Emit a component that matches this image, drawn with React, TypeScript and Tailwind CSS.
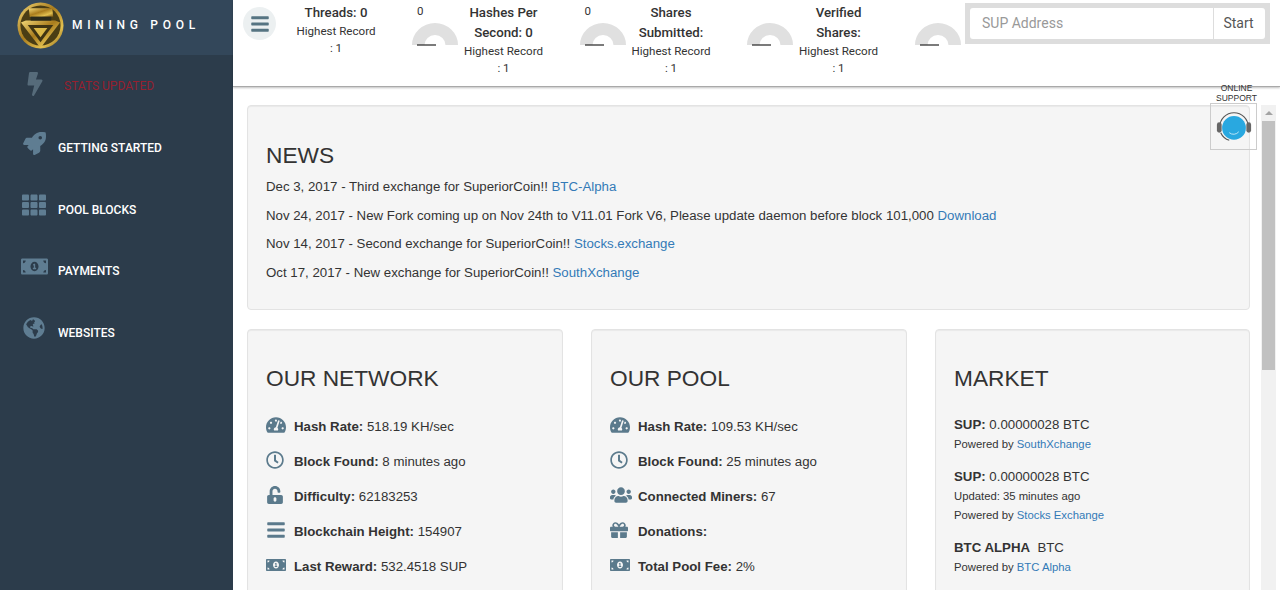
import React from "react";
import {
  FaBolt,
  FaRocket,
  FaTh,
  FaGlobeAmericas,
  FaTachometerAlt,
  FaRegClock,
  FaUnlockAlt,
  FaBars,
  FaUsers,
  FaGift,
  FaMoneyBillAlt,
} from "react-icons/fa";

const Logo = () => (
  <svg viewBox="0 0 48 48" className="w-[47px] h-[47px] shrink-0">
    <defs>
      <linearGradient id="gold" x1="0" y1="0" x2="1" y2="1">
        <stop offset="0" stopColor="#f2d776" />
        <stop offset="0.45" stopColor="#a97c1d" />
        <stop offset="0.75" stopColor="#e3c04f" />
        <stop offset="1" stopColor="#7a5510" />
      </linearGradient>
    </defs>
    <circle cx="24" cy="24" r="23.5" fill="url(#gold)" />
    <circle cx="24" cy="24" r="20.5" fill="#4a3d14" />
    <path d="M12 6.5 H36 L37 15 H13 Z" fill="url(#gold)" />
    <path d="M9 19 H39 L44 21 L24 47 L4 21 Z" fill="url(#gold)" />
    <path d="M11 23.5 H37 L24 41 Z" fill="#3f3412" />
    <path d="M17 26.5 H31 L24 36 Z" fill="#dcb947" />
    <path d="M14 15 H35 V19 H14 Z" fill="#2a2a1c" />
  </svg>
);

const Gauge = ({ value = "" }: { value?: string }) => (
  <div className="ml-[26px] w-[46px] shrink-0">
    <div className="h-[23px] pl-[5px] text-[11.5px] leading-[22px] text-[#333] [font-family:Roboto,sans-serif]">{value}</div>
    <svg viewBox="0 0 46 24" className="block w-[46px] h-[24px]">
      <path d="M0 22 A23 22 0 0 1 46 22 H33.5 A10.5 10 0 0 0 12.5 22 Z" fill="#e0e0e0" />
      <path d="M5 22 H24" stroke="#222" strokeWidth="1.2" />
    </svg>
  </div>
);

const StatItem = ({ title, value }: { title: string[]; value?: string }) => (
  <div className="w-[167.5px] shrink-0 flex items-start">
    <div className="w-[100px] shrink-0 text-center text-[#333] [font-family:Roboto,sans-serif]">
      <div className="mt-[3px] text-[13.25px] leading-[20px] font-medium">
        {title.map((t) => (
          <div key={t}>{t}</div>
        ))}
      </div>
      <div className="text-[11.6px] leading-[17px]">Highest Record</div>
      <div className="text-[11.6px] leading-[17px]">: 1</div>
    </div>
    <Gauge value={value} />
  </div>
);

const NavItem = ({ icon, label }: { icon: React.ReactNode; label: string }) => (
  <div className="h-[61.5px] flex items-center">
    <div className="w-[58px] shrink-0 flex justify-center pl-[10px] mb-[10px] text-[#5f7d92]">{icon}</div>
    <span className="text-[12px] font-medium text-white uppercase [font-family:Roboto,sans-serif]">{label}</span>
  </div>
);

const Row = ({ icon, label, value }: { icon: React.ReactNode; label: string; value?: string }) => (
  <div className="h-[35px] flex items-center text-[13.25px] text-[#333]">
    <div className="w-[28px] shrink-0 mb-[4px] text-[#5b7a8c] text-[20px]">{icon}</div>
    <span>
      <b>{label}</b> {value}
    </span>
  </div>
);

const Well = ({ title, children, className, headClass }: { title: string; children: React.ReactNode; className?: string; headClass: string }) => (
  <div className={"bg-[#f5f5f5] border border-[#e3e3e3] rounded-[4px] shadow-[inset_0_1px_1px_rgba(0,0,0,0.05)] px-[18px] " + (className ?? "")}>
    <h2 className={"text-[22.7px] leading-[26px] text-[#333] " + headClass}>{title}</h2>
    {children}
  </div>
);

const News = ({ text, linkText }: { text: string; linkText: string }) => (
  <p className="text-[13.25px] leading-[20px] text-[#333] mb-[8.6px]">
    {text} <a className="text-[#337ab7]">{linkText}</a>
  </p>
);

const App = () => {
  return (
    <div className="relative w-[1280px] h-[590px] overflow-hidden flex bg-white [font-family:'Liberation_Sans',Arial,sans-serif]">
      {/* Sidebar */}
      <aside className="w-[233px] shrink-0 bg-[#2c3c4b]">
        <div className="h-[55px] bg-[#33475a] flex items-start pl-[17px] pt-[2px]">
          <Logo />
          <span className="ml-[8px] mt-[14px] text-[12px] font-medium text-white tracking-[4.7px] [font-family:Roboto,sans-serif]">
            MINING POOL
          </span>
        </div>
        <div className="h-[62.5px] flex items-center">
          <div className="w-[64px] shrink-0 flex justify-center pl-[5px] mb-[5px] text-[#566b7a] text-[24px]">
            <FaBolt />
          </div>
          <span className="text-[12px] text-[#96202f] uppercase [font-family:Roboto,sans-serif]">Stats Updated</span>
        </div>
        <NavItem icon={<FaRocket className="text-[23px]" />} label="Getting Started" />
        <NavItem icon={<FaTh className="text-[24px]" />} label="Pool Blocks" />
        <NavItem icon={<FaMoneyBillAlt className="text-[27px]" />} label="Payments" />
        <NavItem icon={<FaGlobeAmericas className="text-[22px]" />} label="Websites" />
      </aside>

      <div className="flex-1 min-w-0 flex flex-col">
        {/* Top bar */}
        <header className="h-[87px] shrink-0 border-b border-[#a9a9a9] shadow-[0_1px_2px_rgba(0,0,0,0.25)] flex items-start">
          <div className="ml-[10px] mt-[7px] w-[33px] h-[33px] rounded-full bg-[#ecf0f1] flex items-center justify-center text-[#567482] text-[20px] shrink-0">
            <FaBars />
          </div>
          <div className="ml-[10px] flex">
            <StatItem title={["Threads: 0"]} value="0" />
            <StatItem title={["Hashes Per", "Second: 0"]} value="0" />
            <StatItem title={["Shares", "Submitted:"]} />
            <StatItem title={["Verified", "Shares:"]} />
          </div>
          <div className="absolute left-[965px] top-[3px] w-[305px] h-[41px] bg-[#dddddd] p-[5px] flex">
            <div className="flex-1 bg-white rounded-l-[3px] pl-[12px] flex items-center text-[14px] text-[#999] [font-family:Roboto,sans-serif]">
              SUP Address
            </div>
            <div className="w-[52px] bg-white rounded-r-[3px] border-l border-[#ddd] flex items-center justify-center pr-[2px] text-[14px] text-[#555] [font-family:Roboto,sans-serif]">
              Start
            </div>
          </div>
        </header>

        <div className="flex-1 min-h-0 flex">
          {/* Main content */}
          <main className="w-[1003px] ml-[14px] mt-[18px] shrink-0">
            <Well title="NEWS" className="h-[205px]" headClass="mt-[36px]">
              <div className="mt-[9px]">
                <News text="Dec 3, 2017 - Third exchange for SuperiorCoin!!" linkText="BTC-Alpha" />
                <News text="Nov 24, 2017 - New Fork coming up on Nov 24th to V11.01 Fork V6, Please update daemon before block 101,000" linkText="Download" />
                <News text="Nov 14, 2017 - Second exchange for SuperiorCoin!!" linkText="Stocks.exchange" />
                <News text="Oct 17, 2017 - New exchange for SuperiorCoin!!" linkText="SouthXchange" />
              </div>
            </Well>
            <div className="mt-[19px] grid grid-cols-[316px_316px_315px] gap-x-[28px]">
              <Well title="OUR NETWORK" className="h-[300px]" headClass="mt-[35px]">
                <div className="mt-[18px]">
                  <Row icon={<FaTachometerAlt />} label="Hash Rate:" value="518.19 KH/sec" />
                  <Row icon={<FaRegClock className="text-[18px]" />} label="Block Found:" value="8 minutes ago" />
                  <Row icon={<FaUnlockAlt className="text-[18px]" />} label="Difficulty:" value="62183253" />
                  <Row icon={<FaBars />} label="Blockchain Height:" value="154907" />
                  <Row icon={<FaMoneyBillAlt />} label="Last Reward:" value="532.4518 SUP" />
                </div>
              </Well>
              <Well title="OUR POOL" className="h-[300px]" headClass="mt-[35px]">
                <div className="mt-[18px]">
                  <Row icon={<FaTachometerAlt />} label="Hash Rate:" value="109.53 KH/sec" />
                  <Row icon={<FaRegClock className="text-[18px]" />} label="Block Found:" value="25 minutes ago" />
                  <Row icon={<FaUsers className="text-[22px]" />} label="Connected Miners:" value="67" />
                  <Row icon={<FaGift className="text-[18px]" />} label="Donations:" />
                  <Row icon={<FaMoneyBillAlt />} label="Total Pool Fee:" value="2%" />
                </div>
              </Well>
              <Well title="MARKET" className="h-[300px]" headClass="mt-[35px]">
                <div className="mt-[24px] text-[#333]">
                  <div className="text-[13.25px] leading-[20px]"><b>SUP:</b> 0.00000028 BTC</div>
                  <div className="text-[11.3px] leading-[19px]">Powered by <a className="text-[#337ab7]">SouthXchange</a></div>
                  <div className="text-[13.25px] leading-[20px] mt-[13px]"><b>SUP:</b> 0.00000028 BTC</div>
                  <div className="text-[11.3px] leading-[19px]">Updated: 35 minutes ago</div>
                  <div className="text-[11.3px] leading-[19px]">Powered by <a className="text-[#337ab7]">Stocks Exchange</a></div>
                  <div className="text-[13.25px] leading-[20px] mt-[13px]"><b>BTC ALPHA</b>&nbsp; BTC</div>
                  <div className="text-[11.3px] leading-[19px]">Powered by <a className="text-[#337ab7]">BTC Alpha</a></div>
                </div>
              </Well>
            </div>
          </main>

          {/* Scrollbar */}
          <div className="ml-[11px] mt-[18px] w-[15px] shrink-0 bg-[#f1f1f1] flex flex-col items-center">
            <div className="mt-[6px] w-0 h-0 border-x-[4px] border-x-transparent border-b-[4px] border-b-[#a3a3a3]" />
            <div className="mt-[6px] w-[13px] h-[249px] bg-[#c1c1c1]" />
          </div>
        </div>
      </div>

      {/* Online support widget */}
      <div className="absolute left-[1210px] top-[84px] w-[47px] flex flex-col items-center">
        <div className="w-[60px] text-center ml-[6px] text-[8.5px] leading-[9.5px] text-[#333] uppercase">
          Online<br />Support
        </div>
        <div className="w-[47px] h-[47px] border border-[#cccccc] flex items-center justify-center">
          <svg viewBox="0 0 40 40" className="w-[38px] h-[38px]">
            <path d="M5 20 A15 15 0 0 1 35 20" fill="none" stroke="#555" strokeWidth="1.2" />
            <rect x="2" y="15" width="5" height="11" rx="2.5" fill="#666" />
            <rect x="33" y="15" width="5" height="11" rx="2.5" fill="#666" />
            <path d="M6 26 A15 15 0 0 0 15 34" fill="none" stroke="#555" strokeWidth="1.2" />
            <circle cx="20" cy="21" r="12.5" fill="#29a8e0" />
            <path d="M15 26 A7 7 0 0 0 25 25" fill="none" stroke="#bfe6f7" strokeWidth="1" />
          </svg>
        </div>
      </div>
    </div>
  );
};

export default App;
